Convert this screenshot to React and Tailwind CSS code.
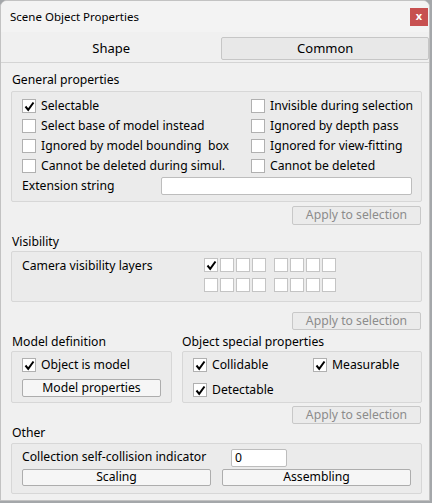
import React from "react";

const F = { fontFamily: '"Noto Sans", "Open Sans", sans-serif' };

function Check({ checked }) {
  return (
    <div className="w-[14px] h-[14px] border border-[#b0b0b0] bg-white flex items-center justify-center shrink-0">
      {checked && (
        <svg width="11" height="11" viewBox="0 0 11 11">
          <path d="M1.5 5.5 L4.2 8.8 L9.5 1.5" fill="none" stroke="#000" strokeWidth="2" />
        </svg>
      )}
    </div>
  );
}

function CB({ label, checked, className = "" }) {
  return (
    <div className={"flex items-center h-[20px] gap-[5px] " + className}>
      <Check checked={checked} />
      <span className="text-[12.2px] text-black whitespace-pre">{label}</span>
    </div>
  );
}

function Btn({ children, disabled, className = "" }) {
  return (
    <div
      className={
        "flex items-center justify-center rounded-[2px] border text-[12.2px] " +
        (disabled
          ? "border-[#c8c8c8] bg-[#ebebeb] text-[#8c8c8c] "
          : "border-[#adadad] bg-[#f6f6f6] text-black ") +
        className
      }
    >
      {children}
    </div>
  );
}

function Label({ children, className = "" }) {
  return <div className={"h-[17px] leading-[17px] text-[12.2px] text-black " + className}>{children}</div>;
}

function Group({ children, className = "" }) {
  return <div className={"border border-[#d7d7d7] bg-[#ebebeb] rounded-[2px] " + className}>{children}</div>;
}

function Layers({ first }) {
  return (
    <div className="flex gap-[8px]">
      {[0, 1].map((g) => (
        <div key={g} className="flex gap-[2px]">
          {[0, 1, 2, 3].map((i) => (
            <div key={i} className="w-[14px] h-[14px] border border-[#c4c4c4] bg-white flex items-center justify-center">
              {first && g === 0 && i === 0 && (
                <svg width="11" height="11" viewBox="0 0 11 11">
                  <path d="M1.5 5.5 L4.2 8.8 L9.5 1.5" fill="none" stroke="#000" strokeWidth="2" />
                </svg>
              )}
            </div>
          ))}
        </div>
      ))}
    </div>
  );
}

export default function App() {
  return (
    <div className="w-[432px] h-[503px] bg-[#a4a7aa] overflow-hidden relative" style={F}>
      <div className="w-[430px] h-[501px] bg-[#f0f0f0] border border-[#c2c2c2] rounded-t-[7px] overflow-hidden flex flex-col">
        {/* title bar */}
        <div className="h-[31px] bg-[#f3f3f3] flex items-center justify-between pl-[9px] pr-[1px] shrink-0">
          <span className="text-[11.5px] text-black">Scene Object Properties</span>
          <div className="w-[18px] h-[18px] bg-[#c75050] flex items-center justify-center text-white text-[11px] font-bold leading-none pb-[2px]">
            x
          </div>
        </div>
        {/* tabs */}
        <div className="h-[31px] flex items-end border-b border-[#d4d4d4] shrink-0">
          <div className="w-[221px] h-[26px] flex items-center justify-center text-[13px] text-black">Shape</div>
          <div className="w-[208px] h-[23px] mb-[2px] border border-[#c6c6c6] bg-[#e8e8e8] rounded-[2px] flex items-center justify-center text-[13px] text-black">
            Common
          </div>
        </div>

        <div className="pl-[10px] pr-[7px] flex flex-col">
          <Label className="mt-[8px] pl-[1px]">General properties</Label>
          <Group className="mt-[3px] h-[111px] pt-[4px] pl-[10px] pr-[8px]">
            <div className="flex">
              <div className="w-[229px] shrink-0 flex flex-col">
                <CB label="Selectable" checked />
                <CB label="Select base of model instead" />
                <CB label="Ignored by model bounding  box" />
                <CB label="Cannot be deleted during simul." />
              </div>
              <div className="flex flex-col shrink-0">
                <CB label="Invisible during selection" />
                <CB label="Ignored by depth pass" />
                <CB label="Ignored for view-fitting" />
                <CB label="Cannot be deleted" />
              </div>
            </div>
            <div className="flex items-center h-[20px]">
              <span className="w-[139px] shrink-0 text-[12.2px] text-black">Extension string</span>
              <div className="w-[251px] h-[18px] bg-white border border-[#bdbdbd] rounded-[2px]" />
            </div>
          </Group>
          <div className="flex justify-end mt-[4px] pr-[1px]">
            <Btn disabled className="w-[129px] h-[19px]">Apply to selection</Btn>
          </div>

          <Label className="mt-[8px] pl-[1px]">Visibility</Label>
          <Group className="mt-[1px] h-[51px] pl-[10px] flex">
            <div className="w-[182px] shrink-0 pt-[5px] text-[12.2px] text-black">Camera visibility layers</div>
            <div className="flex flex-col gap-[6px] pt-[6px]">
              <Layers first />
              <Layers />
            </div>
          </Group>
          <div className="flex justify-end mt-[10px] pr-[1px]">
            <Btn disabled className="w-[129px] h-[18px]">Apply to selection</Btn>
          </div>

          <div className="flex mt-[3px] gap-[10px]">
            <div className="w-[161px] flex flex-col">
              <Label className="pl-[1px]">Model definition</Label>
              <Group className="mt-[1px] h-[52px] pl-[10px] pr-[10px] pt-[3px]">
                <CB label="Object is model" checked />
                <Btn className="w-[139px] h-[18px] mt-[4px]">Model properties</Btn>
              </Group>
            </div>
            <div className="flex-1 flex flex-col">
              <Label>Object special properties</Label>
              <Group className="mt-[1px] h-[52px] pl-[10px] pt-[3px]">
                <div className="flex">
                  <CB label="Collidable" checked className="w-[120px]" />
                  <CB label="Measurable" checked />
                </div>
                <CB label="Detectable" checked className="mt-[5px]" />
              </Group>
            </div>
          </div>
          <div className="flex justify-end mt-[3px] pr-[1px]">
            <Btn disabled className="w-[129px] h-[18px]">Apply to selection</Btn>
          </div>

          <Label className="mt-[0px] pl-[1px]">Other</Label>
          <Group className="mt-[2px] h-[51px] pl-[10px] pr-[10px] pt-[4px]">
            <div className="flex items-center h-[19px]">
              <span className="w-[209px] shrink-0 text-[12.2px] text-black">Collection self-collision indicator</span>
              <div className="w-[56px] h-[18px] bg-white border border-[#bdbdbd] rounded-[2px] text-[12.2px] leading-[16px] pl-[3px]">0</div>
            </div>
            <div className="flex gap-[11px] mt-[2px]">
              <Btn className="w-[189px] h-[17px]">Scaling</Btn>
              <Btn className="w-[189px] h-[17px]">Assembling</Btn>
            </div>
          </Group>
        </div>
      </div>
    </div>
  );
}
